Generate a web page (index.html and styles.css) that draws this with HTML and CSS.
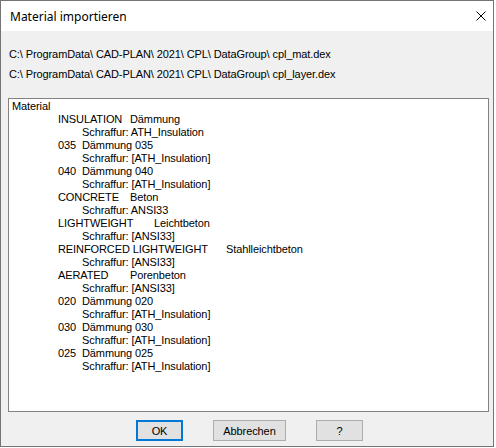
FILE: index.html
```html
<!DOCTYPE html>
<html lang="de">
<head>
<meta charset="utf-8">
<title>Material importieren</title>
<link rel="stylesheet" href="styles.css">
</head>
<body>
<div class="dialog">
  <div class="titlebar">
    <span class="title">Material importieren</span>
    <svg class="close" width="10" height="10" viewBox="0 0 10 10"><path d="M0.5 0.5 L9.5 9.5 M9.5 0.5 L0.5 9.5" stroke="#000" stroke-width="1" fill="none"/></svg>
  </div>
  <div class="content">
    <div class="paths">
      <div class="path">C:\ ProgramData\ CAD-PLAN\ 2021\ CPL\ DataGroup\ cpl_mat.dex</div>
      <div class="path second">C:\ ProgramData\ CAD-PLAN\ 2021\ CPL\ DataGroup\ cpl_layer.dex</div>
    </div>
    <div class="listbox"><div class="line first">Material</div><div class="line">		INSULATION	Dämmung</div><div class="line">			Schraffur: ATH_Insulation</div><div class="line">		035	Dämmung 035</div><div class="line">			Schraffur: [ATH_Insulation]</div><div class="line">		040	Dämmung 040</div><div class="line">			Schraffur: [ATH_Insulation]</div><div class="line">		CONCRETE	Beton</div><div class="line">			Schraffur: ANSI33</div><div class="line">		LIGHTWEIGHT	Leichtbeton</div><div class="line">			Schraffur: [ANSI33]</div><div class="line">		REINFORCED LIGHTWEIGHT	Stahlleichtbeton</div><div class="line">			Schraffur: [ANSI33]</div><div class="line">		AERATED	Porenbeton</div><div class="line">			Schraffur: [ANSI33]</div><div class="line">		020	Dämmung 020</div><div class="line">			Schraffur: [ATH_Insulation]</div><div class="line">		030	Dämmung 030</div><div class="line">			Schraffur: [ATH_Insulation]</div><div class="line">		025	Dämmung 025</div><div class="line">			Schraffur: [ATH_Insulation]</div></div>
    <div class="buttons">
      <button class="btn btn-ok">OK</button>
      <button class="btn btn-cancel">Abbrechen</button>
      <button class="btn btn-help">?</button>
    </div>
  </div>
</div>
</body>
</html>
```

FILE: styles.css
```css
html, body {
  margin: 0;
  padding: 0;
}
body {
  width: 496px;
  height: 448px;
  background: #ffffff;
  font-family: "Liberation Sans", Arial, sans-serif;
  font-size: 11px;
  letter-spacing: -0.1px;
  color: #000;
  overflow: hidden;
}
.dialog {
  box-sizing: border-box;
  width: 494px;
  height: 447px;
  border: 1px solid #747474;
  background: #f0f0f0;
  display: flex;
  flex-direction: column;
}
.titlebar {
  height: 30px;
  flex: none;
  background: #ffffff;
  display: flex;
  align-items: center;
  justify-content: space-between;
  padding: 0 7px 0 9px;
}
.title {
  font-family: "Noto Sans", "Open Sans", sans-serif;
  font-size: 12px;
  letter-spacing: 0;
  color: #000;
}
.close {
  display: block;
}
.content {
  flex: 1;
  padding: 17px 0 0 7px;
}
.path {
  line-height: 13px;
  height: 13px;
  padding-left: 1px;
  white-space: nowrap;
}
.path.second {
  margin-top: 7px;
}
.listbox {
  box-sizing: border-box;
  margin-top: 17px;
  width: 481px;
  height: 314px;
  border: 1px solid #828282;
  background: #ffffff;
  padding: 1px 0 0 1px;
}
.line {
  white-space: pre;
  tab-size: 24px;
  -moz-tab-size: 24px;
  line-height: 13px;
  height: 13px;
}
.line.first {
  padding-left: 2px;
}
.buttons {
  display: flex;
  gap: 30px;
  margin-top: 8px;
  padding-left: 128px;
}
.btn {
  box-sizing: border-box;
  height: 21px;
  padding: 0;
  margin: 0;
  background: #e1e1e1;
  border: 1px solid #adadad;
  font-family: "Liberation Sans", Arial, sans-serif;
  font-size: 11px;
  letter-spacing: -0.1px;
  color: #000;
}
.btn-ok {
  width: 47px;
  border: 2px solid #0078d7;
}
.btn-cancel {
  width: 73px;
}
.btn-help {
  width: 47px;
}
```
